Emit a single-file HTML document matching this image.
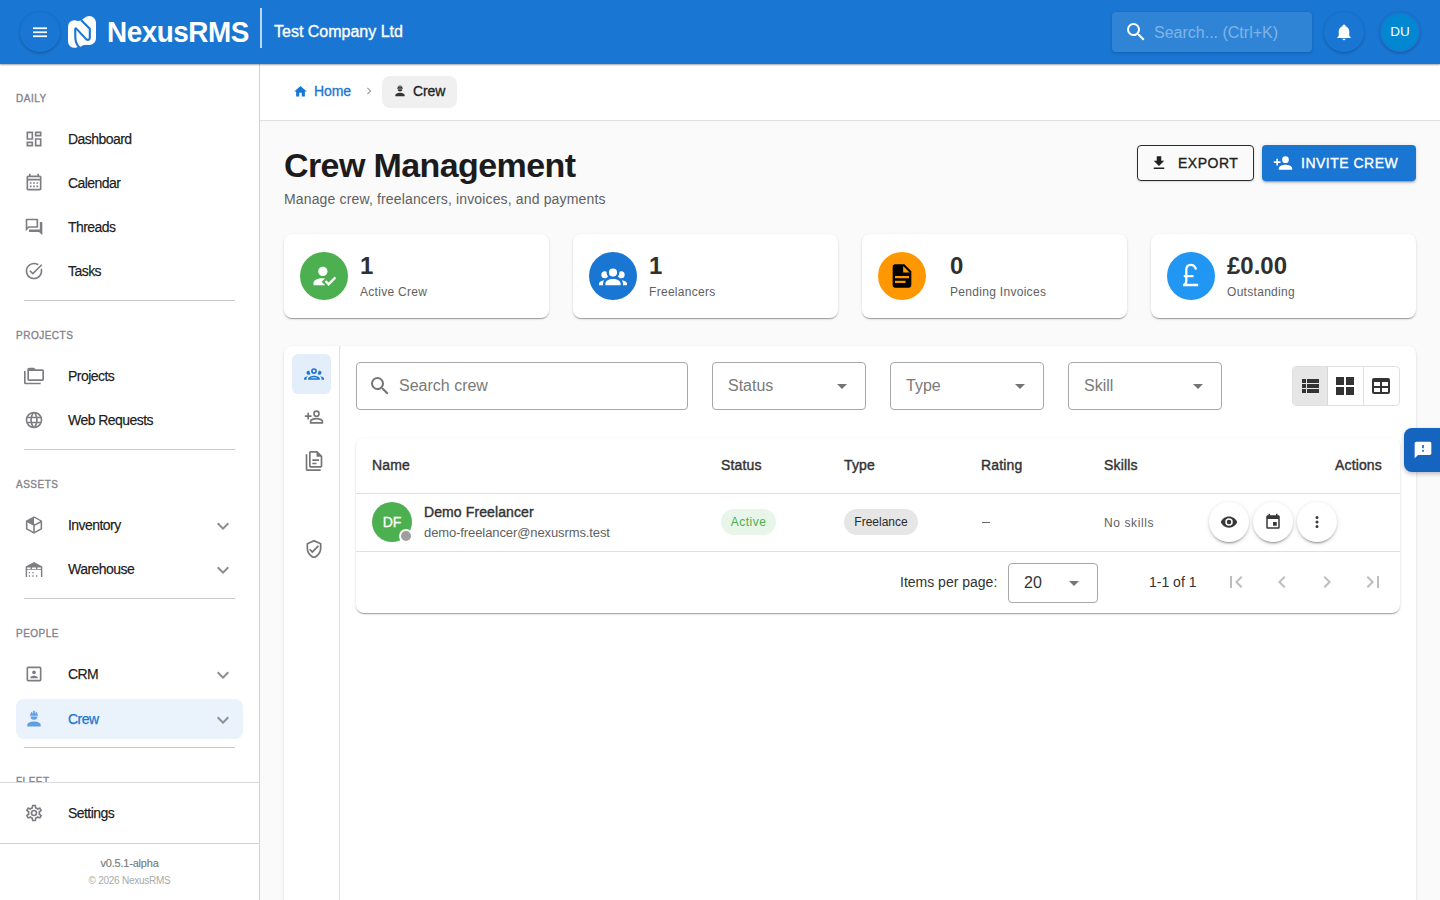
<!DOCTYPE html>
<html><head><meta charset="utf-8">
<style>
*{box-sizing:border-box;margin:0;padding:0}
html,body{width:1440px;height:900px;overflow:hidden}
body{font-family:"Liberation Sans",sans-serif;background:#fafafa;color:rgba(0,0,0,.87);position:relative}
.abs{position:absolute}
svg{display:block}
/* header */
#hdr{position:absolute;left:0;top:0;width:1440px;height:64px;background:#1976d2;box-shadow:0 1px 1.5px rgba(0,0,0,.35);z-index:5}
.menubtn{position:absolute;left:20px;top:12px;width:40px;height:40px;border-radius:50%;background:#1976d2;box-shadow:0 1px 3px rgba(0,0,0,.25)}
.brand{position:absolute;left:107px;top:15px;font-size:29.5px;line-height:34px;font-weight:700;color:#fff;letter-spacing:-0.5px;transform-origin:0 0;transform:scaleX(0.945);white-space:nowrap}
.vdiv{position:absolute;left:260px;top:8px;width:2px;height:40px;background:rgba(255,255,255,.7)}
.company{position:absolute;left:274px;top:23px;font-size:16px;color:#fff;font-weight:400;-webkit-text-stroke:0.35px #fff;letter-spacing:0px}
.hsearch{position:absolute;left:1112px;top:12px;width:200px;height:40px;border-radius:4px;background:rgba(255,255,255,.1);box-shadow:0 1px 3px rgba(0,0,0,.2)}
.hsearch span{position:absolute;left:42px;top:12px;font-size:16px;color:rgba(255,255,255,.4)}
.bell{position:absolute;left:1324px;top:12px;width:40px;height:40px;border-radius:50%;background:#1976d2;box-shadow:0 1px 3px rgba(0,0,0,.25)}
.avatar{position:absolute;left:1380px;top:12px;width:40px;height:40px;border-radius:50%;background:#1976d2;box-shadow:0 1px 3px rgba(0,0,0,.25);color:#fff;font-size:14px;text-align:center;line-height:38px}
/* sidebar */
#side{position:absolute;left:0;top:64px;width:260px;height:836px;background:#fff;border-right:1px solid #d4d0da}
.sec{position:absolute;left:16px;margin-top:2px;font-size:10px;font-weight:400;letter-spacing:0.5px;color:#86848c;-webkit-text-stroke:0.35px #86848c}
.nav{position:absolute;left:16px;width:227px;height:40px}
.nav .ic{position:absolute;left:8px;top:10px;width:20px;height:20px}
.nav .t{position:absolute;left:52px;top:12px;font-size:14px;color:rgba(0,0,0,.87);letter-spacing:-0.55px;-webkit-text-stroke:0.25px currentColor;white-space:nowrap}
.nav .chev{position:absolute;left:195px;top:9px}
.sdiv{position:absolute;left:24px;width:211px;height:1px;background:#c8c8c8}
.nav.act{background:#eaf2fc;border-radius:8px}
.nav.act .t{color:#1976d2}
.sfoot{position:absolute;left:0;top:718px;width:259px;height:118px;background:#fff;border-top:1px solid #dcd8e0}
.sfoot .ver{position:absolute;left:0;width:259px;top:74px;text-align:center;font-size:11px;color:#7a7a7a;letter-spacing:-0.2px;-webkit-text-stroke:0.15px #7a7a7a}
.sfoot .copy{position:absolute;left:0;width:259px;top:92px;text-align:center;font-size:10px;color:#aaa;letter-spacing:-0.25px}
.sfoot:after{content:"";position:absolute;left:0;top:60px;width:259px;height:1px;background:#d4d0da}
/* main */
#bc{position:absolute;left:260px;top:64px;width:1180px;height:57px;background:#fff;border-bottom:1px solid #e0e0e0}

.bchome{position:absolute;left:293px;top:81px}
.bctext{position:absolute;font-size:14px;line-height:20px;-webkit-text-stroke:0.3px currentColor;letter-spacing:-0.1px}
.chip-bc{position:absolute;left:382px;top:76px;width:75px;height:32px;border-radius:8px;background:#f0f0f0}
h1{position:absolute;left:284px;top:145px;font-size:34px;line-height:40px;font-weight:700;color:#1c1c1c;letter-spacing:-0.6px;white-space:nowrap}
.subt{position:absolute;left:284px;top:189px;font-size:14px;line-height:20px;color:#616161;letter-spacing:0.15px;white-space:nowrap}
.btn{position:absolute;top:145px;height:36px;border-radius:4px;font-size:14px;line-height:35px;letter-spacing:0.5px;font-weight:400;-webkit-text-stroke:0.35px currentColor}
.btn-out{left:1137px;width:117px;border:1px solid #2b2b2b;background:#fafafa;color:#222;box-shadow:0 1px 2px rgba(0,0,0,.15)}
.btn-pri{left:1262px;width:154px;background:#1976d2;color:#fff;box-shadow:0 3px 1px -2px rgba(0,0,0,.2),0 2px 2px 0 rgba(0,0,0,.14),0 1px 5px 0 rgba(0,0,0,.12)}
.btn svg{position:absolute;top:9px}
.btn span{position:absolute;top:0}
.stat{position:absolute;top:234px;width:265px;height:84px;background:#fff;border-radius:8px;box-shadow:0 2px 1px -1px rgba(0,0,0,.2),0 1px 1px 0 rgba(0,0,0,.14),0 1px 3px 0 rgba(0,0,0,.12)}
.stat .circ{position:absolute;left:16px;top:18px;width:48px;height:48px;border-radius:50%}
.stat .circ svg{position:absolute;left:10px;top:10px}
.stat .num{position:absolute;left:76px;top:18px;font-size:24px;line-height:28px;font-weight:700;color:#303030}
.stat .lbl{position:absolute;left:76px;top:50px;font-size:12px;line-height:16px;color:#616161;letter-spacing:0.3px}
#big{position:absolute;left:284px;top:346px;width:1132px;height:620px;background:#fff;border-radius:8px;box-shadow:0 2px 1px -1px rgba(0,0,0,.2),0 1px 1px 0 rgba(0,0,0,.14),0 1px 3px 0 rgba(0,0,0,.12)}
.rail{position:absolute;left:0;top:0;width:56px;height:620px;border-right:1px solid #e0e0e0}
.rail .ri{position:absolute;left:8px;width:39px;height:40px;border-radius:6px}
.rail .ri svg{position:absolute;left:12px;top:10px}
.fld{position:absolute;top:362px;height:48px;border:1px solid #a8a8a8;border-radius:4px;background:#fff}
.fld .ph{position:absolute;top:13px;font-size:16px;line-height:20px;color:#7a7a7a}
.fld .arr{position:absolute;top:12px}
.vt{position:absolute;left:1292px;top:366px;width:108px;height:40px;border:1px solid #e0e0e0;border-radius:4px;overflow:hidden;background:#fff}
.vt div{position:absolute;top:0;height:40px}
#tbl{position:absolute;left:356px;top:438px;width:1044px;height:175px;background:#fff;border-radius:8px;box-shadow:0 2px 1px -1px rgba(0,0,0,.2),0 1px 1px 0 rgba(0,0,0,.14),0 1px 3px 0 rgba(0,0,0,.12)}
.th{position:absolute;top:455px;font-size:14px;line-height:20px;font-weight:400;color:#333;-webkit-text-stroke:0.4px #333;letter-spacing:0.15px}
.hline{position:absolute;left:356px;width:1044px;height:1px;background:#e0e0e0}
.chip{position:absolute;top:509px;height:26px;border-radius:13px;font-size:12px;line-height:26px;text-align:center}
.abtn{position:absolute;top:502px;width:40px;height:40px;border-radius:50%;background:#fff;box-shadow:0 3px 1px -2px rgba(0,0,0,.2),0 2px 2px 0 rgba(0,0,0,.14),0 1px 5px 0 rgba(0,0,0,.12)}
.abtn svg{position:absolute;left:11px;top:11px}
.pg{position:absolute;top:570px}
.fb{position:absolute;left:1404px;top:428px;width:40px;height:44px;border-radius:8px 0 0 8px;background:#1565c0;box-shadow:0 2px 4px rgba(0,0,0,.25)}
.fb svg{position:absolute;left:9px;top:12px}
</style></head>
<body>
<div id="hdr">
  <div class="menubtn"><svg width="40" height="40" viewBox="0 0 40 40"><rect x="13" y="15.4" width="14" height="1.7" fill="#fff"/><rect x="13" y="19.4" width="14" height="1.7" fill="#fff"/><rect x="13" y="23.4" width="14" height="1.7" fill="#fff"/></svg></div>
  <svg class="abs" style="left:68px;top:16px" width="28" height="32" viewBox="0 0 28 32"><g fill="#fff"><rect x="0" y="4.2" width="13" height="27.6" rx="6.5"/><rect x="14.5" y="0" width="13.5" height="29" rx="6.75"/><rect x="6" y="9" width="16" height="17"/><path d="M7,5.5 L13.2,4.4 L16.5,1.8 L19,10 L7,10 Z"/><path d="M6,26 L11.8,31.2 L15,29.2 L21,28.5 L21,24 L6,24 Z"/></g><path d="M13.2,4.2 L21.8,12.8 L21.8,21.6 Q21.6,24.6 18.6,23.6 L8.6,12.9 Q7.2,11.6 7.2,13.8 L7.4,22.5 Q7.8,28.5 11.8,31.9" fill="none" stroke="#1976d2" stroke-width="2.1"/></svg>
  <div class="brand">NexusRMS</div>
  <div class="vdiv"></div>
  <div class="company">Test Company Ltd</div>
  <div class="hsearch"><svg width="24" height="24" viewBox="0 0 24 24" style="position:absolute;left:12px;top:8px"><path fill="#fff" d="M9.5,3A6.5,6.5 0 0,1 16,9.5C16,11.11 15.41,12.59 14.44,13.73L14.71,14H15.5L20.5,19L19,20.5L14,15.5V14.71L13.73,14.44C12.59,15.41 11.11,16 9.5,16A6.5,6.5 0 0,1 3,9.5A6.5,6.5 0 0,1 9.5,3M9.5,5C7,5 5,7 5,9.5C5,12 7,14 9.5,14C12,14 14,12 14,9.5C14,7 12,5 9.5,5Z"/></svg><span>Search... (Ctrl+K)</span></div>
  <div class="bell"><svg width="18" height="18" viewBox="0 0 24 24" style="position:absolute;left:11px;top:11px"><path fill="#fff" d="M21,19V20H3V19L5,17V11C5,7.9 7.03,5.17 10,4.29C10,4.19 10,4.1 10,4A2,2 0 0,1 12,2A2,2 0 0,1 14,4C14,4.1 14,4.19 14,4.29C16.97,5.17 19,7.9 19,11V17L21,19M14,21A2,2 0 0,1 12,23A2,2 0 0,1 10,21"/></svg></div>
  <div class="avatar"><div style="position:absolute;left:2px;top:2px;width:36px;height:36px;border-radius:50%;background:#0288d1;line-height:36px;font-size:13.5px">DU</div></div>
</div>
<div id="side">
<div class="sec" style="top:27px">DAILY</div>
<div class="nav" style="top:55px"><svg class="ic" viewBox="0 0 24 24"><path fill="#7f7d84" d="M19 5v2h-4V5h4M9 5v6H5V5h4m10 8v6h-4v-6h4M9 17v2H5v-2h4M21 3h-8v6h8V3zM11 3H3v10h8V3zm10 8h-8v10h8V11zm-10 4H3v6h8v-6z"/></svg><div class="t">Dashboard</div></div>
<div class="nav" style="top:99px"><svg class="ic" viewBox="0 0 24 24"><path fill="#7f7d84" d="M7 11H9V13H7V11M21 5V19C21 20.11 20.11 21 19 21H5C3.89 21 3 20.1 3 19V5C3 3.9 3.9 3 5 3H6V1H8V3H16V1H18V3H19C20.11 3 21 3.9 21 5M5 7H19V5H5V7M19 19V9H5V19H19M15 13V11H17V13H15M11 13V11H13V13H11M7 15H9V17H7V15M15 17V15H17V17H15M11 17V15H13V17H11Z"/></svg><div class="t">Calendar</div></div>
<div class="nav" style="top:143px"><svg class="ic" viewBox="0 0 24 24"><path fill="#7f7d84" d="M15,4V11H5.17L4,12.17V4H15M16,2H3A1,1 0 0,0 2,3V17L6,13H16A1,1 0 0,0 17,12V3A1,1 0 0,0 16,2M21,6H19V15H6V17A1,1 0 0,0 7,18H18L22,22V7A1,1 0 0,0 21,6Z"/></svg><div class="t">Threads</div></div>
<div class="nav" style="top:187px"><svg class="ic" viewBox="0 0 24 24"><path fill="#7f7d84" d="M22,5.18L10.59,16.6l-4.24-4.24l1.41-1.41l2.83,2.83l10-10L22,5.18z M19.79,10.22C19.92,10.79,20,11.39,20,12c0,4.42-3.58,8-8,8s-8-3.58-8-8c0-4.42,3.58-8,8-8c1.58,0,3.04,0.46,4.28,1.25l1.44-1.44C16.1,2.67,14.13,2,12,2C6.48,2,2,6.48,2,12c0,5.52,4.48,10,10,10s10-4.48,10-10c0-1.19-0.22-2.33-0.6-3.39L19.79,10.22z"/></svg><div class="t">Tasks</div></div>
<div class="sdiv" style="top:236px"></div>
<div class="sec" style="top:264px">PROJECTS</div>
<div class="nav" style="top:292px"><svg class="ic" viewBox="0 0 24 24"><path fill="#7f7d84" d="M22,4A2,2 0 0,1 24,6V16A2,2 0 0,1 22,18H6A2,2 0 0,1 4,16V4A2,2 0 0,1 6,2H12L14,4H22M2,6V20H20V22H2A2,2 0 0,1 0,20V11H0V6H2M6,6V16H22V6H6Z"/></svg><div class="t">Projects</div></div>
<div class="nav" style="top:336px"><svg class="ic" viewBox="0 0 24 24"><path fill="#7f7d84" d="M16.36,14C16.44,13.34 16.5,12.68 16.5,12C16.5,11.32 16.44,10.66 16.36,10H19.74C19.9,10.64 20,11.31 20,12C20,12.69 19.9,13.36 19.74,14M14.59,19.56C15.19,18.45 15.65,17.25 15.97,16H18.92C17.96,17.65 16.43,18.93 14.59,19.56M14.34,14H9.66C9.56,13.340 9.5,12.68 9.5,12C9.5,11.32 9.56,10.65 9.66,10H14.34C14.43,10.65 14.5,11.32 14.5,12C14.5,12.68 14.43,13.34 14.34,14M12,19.96C11.17,18.76 10.5,17.43 10.09,16H13.91C13.5,17.43 12.83,18.76 12,19.96M8,8H5.08C6.03,6.34 7.57,5.06 9.4,4.44C8.8,5.55 8.35,6.750 8,8M5.08,16H8C8.350,17.25 8.8,18.45 9.4,19.56C7.57,18.93 6.03,17.65 5.08,16M4.26,14C4.1,13.36 4,12.69 4,12C4,11.31 4.1,10.64 4.26,10H7.64C7.56,10.66 7.5,11.32 7.5,12C7.5,12.68 7.56,13.34 7.64,14M12,4.03C12.83,5.23 13.5,6.57 13.91,8H10.09C10.5,6.57 11.17,5.23 12,4.03M18.92,8H15.97C15.65,6.75 15.19,5.55 14.59,4.44C16.43,5.07 17.96,6.34 18.92,8M12,2C6.47,2 2,6.5 2,12A10,10 0 0,0 12,22A10,10 0 0,0 22,12A10,10 0 0,0 12,2Z"/></svg><div class="t">Web Requests</div></div>
<div class="sdiv" style="top:385px"></div>
<div class="sec" style="top:413px">ASSETS</div>
<div class="nav" style="top:441px"><svg class="ic" viewBox="0 0 24 24"><g fill="none" stroke="#7f7d84" stroke-width="1.9" stroke-linejoin="round"><path d="M12,2.6 L20.8,7.4 V16.6 L12,21.4 L3.2,16.6 V7.4 Z"/><path d="M3.2,7.4 L12,12 L20.8,7.4 M12,12 V21.4 M12,12.4 L20.2,8.2"/></g><path d="M3.2,7.4 L12,2.6 V11.6 Z" fill="#7f7d84"/><path d="M12.6,4 L19.5,7.6 L12.6,11 Z" fill="#fff"/></svg><div class="t">Inventory</div><svg class="chev" width="24" height="24" viewBox="0 0 24 24"><path fill="#8e8c94" d="M7.41,8.58L12,13.17L16.59,8.58L18,10L12,16L6,10L7.41,8.58Z"/></svg></div>
<div class="nav" style="top:485px"><svg class="ic" viewBox="0 0 24 24"><path fill="#7f7d84" fill-rule="evenodd" d="M2,9 L12,3.5 L22,9 V21.5 H20.3 V13 H3.7 V21.5 H2 Z M3.8,10.1 H7.9 V12 H3.8 Z M9.6,10.1 H14.3 V12 H9.6 Z M16,10.1 H20.2 V12 H16 Z"/><path fill="#7f7d84" d="M5.7,15.6h1.6v1.6h-1.6z M10,15.6h1.6v1.6h-1.6z M5.7,19.6h1.6v1.6h-1.6z M10,19.6h1.6v1.6h-1.6z M14.3,19.6h1.6v1.6h-1.6z"/></svg><div class="t">Warehouse</div><svg class="chev" width="24" height="24" viewBox="0 0 24 24"><path fill="#8e8c94" d="M7.41,8.58L12,13.17L16.59,8.58L18,10L12,16L6,10L7.41,8.58Z"/></svg></div>
<div class="sdiv" style="top:534px"></div>
<div class="sec" style="top:562px">PEOPLE</div>
<div class="nav" style="top:590px"><svg class="ic" viewBox="0 0 24 24"><path fill="#7f7d84" d="M19,19H5V5H19M19,3H5A2,2 0 0,0 3,5V19A2,2 0 0,0 5,21H19A2,2 0 0,0 21,19V5A2,2 0 0,0 19,3M16.5,16.25C16.5,14.75 13.5,14 12,14C10.5,14 7.5,14.750 7.5,16.25V17H16.5M12,12.25A2.25,2.25 0 0,0 14.25,10A2.25,2.25 0 0,0 12,7.75A2.25,2.25 0 0,0 9.75,10A2.25,2.25 0 0,0 12,12.25Z"/></svg><div class="t">CRM</div><svg class="chev" width="24" height="24" viewBox="0 0 24 24"><path fill="#8e8c94" d="M7.41,8.58L12,13.17L16.59,8.58L18,10L12,16L6,10L7.41,8.58Z"/></svg></div>
<div class="nav act" style="top:635px"><svg class="ic" viewBox="0 0 24 24"><path fill="#5f9ee3" d="M12,15C7.58,15 4,16.79 4,19V21H20V19C20,16.79 16.42,15 12,15M8,9A4,4 0 0,0 12,13A4,4 0 0,0 16,9M11.5,2C11.2,2 11,2.21 11,2.5V5.5H10V3C10,3 7.75,3.86 7.75,6.75C7.75,6.75 7,6.89 7,8H17C16.95,6.89 16.25,6.75 16.25,6.75C16.25,3.86 14,3 14,3V5.5H13V2.5C13,2.21 12.81,2 12.5,2H11.5Z"/></svg><div class="t">Crew</div><svg class="chev" width="24" height="24" viewBox="0 0 24 24"><path fill="#8e8c94" d="M7.41,8.58L12,13.17L16.59,8.58L18,10L12,16L6,10L7.41,8.58Z"/></svg></div>
<div class="sdiv" style="top:683px"></div>
<div class="sec" style="top:710px">FLEET</div>
<div class="sfoot">
<div class="nav" style="top:10px"><svg class="ic" viewBox="0 0 24 24"><path fill="#7f7d84" d="M12,8A4,4 0 0,1 16,12A4,4 0 0,1 12,16A4,4 0 0,1 8,12A4,4 0 0,1 12,8M12,10A2,2 0 0,0 10,12A2,2 0 0,0 12,14A2,2 0 0,0 14,12A2,2 0 0,0 12,10M10,22C9.75,22 9.54,21.82 9.5,21.58L9.13,18.93C8.5,18.68 7.96,18.34 7.44,17.94L4.95,18.95C4.73,19.03 4.46,18.95 4.34,18.73L2.34,15.27C2.21,15.05 2.27,14.78 2.46,14.63L4.57,12.97L4.5,12L4.57,11L2.46,9.37C2.27,9.22 2.21,8.95 2.34,8.73L4.34,5.27C4.46,5.05 4.73,4.96 4.95,5.050L7.44,6.05C7.96,5.66 8.5,5.32 9.13,5.07L9.5,2.42C9.54,2.18 9.75,2 10,2H14C14.25,2 14.46,2.18 14.5,2.42L14.87,5.07C15.5,5.32 16.04,5.66 16.56,6.05L19.05,5.05C19.27,4.96 19.54,5.05 19.66,5.27L21.66,8.73C21.79,8.95 21.73,9.22 21.54,9.37L19.43,11L19.5,12L19.43,13L21.54,14.63C21.73,14.78 21.79,15.05 21.66,15.27L19.66,18.73C19.54,18.95 19.27,19.04 19.05,18.95L16.56,17.95C16.04,18.34 15.5,18.68 14.87,18.93L14.5,21.58C14.46,21.82 14.25,22 14,22H10M11.25,4L10.88,6.61C9.68,6.86 8.62,7.5 7.85,8.39L5.44,7.35L4.69,8.65L6.8,10.2C6.4,11.37 6.4,12.64 6.8,13.8L4.68,15.36L5.43,16.66L7.86,15.62C8.63,16.5 9.68,17.14 10.87,17.38L11.24,20H12.76L13.13,17.39C14.32,17.14 15.37,16.5 16.14,15.62L18.57,16.66L19.32,15.36L17.2,13.81C17.6,12.64 17.6,11.370 17.2,10.2L19.31,8.65L18.56,7.35L16.15,8.39C15.38,7.5 14.32,6.86 13.12,6.62L12.75,4H11.25Z"/></svg><div class="t">Settings</div></div>
<div class="ver">v0.5.1-alpha</div>
<div class="copy">&copy; 2026 NexusRMS</div>
</div>
</div>

<div id="bc"></div>
<svg width="15" height="15" viewBox="0 0 24 24" style="position:absolute;left:293px;top:84px"><path fill="#1976d2" d="M10,20V14H14V20H19V12H22L12,3L2,12H5V20H10Z"/></svg>
<div class="bctext" style="left:314px;top:81px;color:#1976d2">Home</div>
<svg width="14" height="14" viewBox="0 0 24 24" style="position:absolute;left:362px;top:84px"><path fill="#9e9e9e" d="M8.59,16.58L13.17,12L8.59,7.41L10,6L16,12L10,18L8.59,16.58Z"/></svg>
<div class="chip-bc"></div>
<svg width="14" height="14" viewBox="0 0 24 24" style="position:absolute;left:393px;top:84px"><path fill="#333" d="M12,15C7.58,15 4,16.79 4,19V21H20V19C20,16.79 16.42,15 12,15M8,9A4,4 0 0,0 12,13A4,4 0 0,0 16,9M11.5,2C11.2,2 11,2.21 11,2.5V5.5H10V3C10,3 7.75,3.86 7.75,6.75C7.75,6.75 7,6.89 7,8H17C16.95,6.89 16.25,6.75 16.25,6.75C16.25,3.86 14,3 14,3V5.5H13V2.5C13,2.21 12.81,2 12.5,2H11.5Z"/></svg>
<div class="bctext" style="left:413px;top:81px;color:#222">Crew</div>

<h1>Crew Management</h1>
<div class="subt">Manage crew, freelancers, invoices, and payments</div>

<div class="btn btn-out"><svg width="18" height="18" viewBox="0 0 24 24" style="left:12px;top:8px"><path fill="#222" d="M5,20H19V18H5M19,9H15V3H9V9H5L12,16L19,9Z"/></svg><span style="left:40px">EXPORT</span></div>
<div class="btn btn-pri"><svg width="20" height="20" viewBox="0 0 24 24" style="left:11px;top:8px"><path fill="#fff" d="M15,14C12.33,14 7,15.33 7,18V20H23V18C23,15.33 17.67,14 15,14M6,10V7H4V10H1V12H4V15H6V12H9V10M15,12A4,4 0 0,0 19,8A4,4 0 0,0 15,4A4,4 0 0,0 11,8A4,4 0 0,0 15,12Z"/></svg><span style="left:39px;top:1px">INVITE CREW</span></div>

<div class="stat" style="left:284px"><div class="circ" style="background:#4caf50"><svg width="28" height="28" viewBox="0 0 24 24" style=""><path fill="#fff" d="M21.1,12.5L22.5,13.91L15.97,20.5L12.5,17L13.9,15.59L15.97,17.67L21.1,12.5M10,17L13,20H3V18C3,15.79 6.58,14 11,14L12.89,14.11L10,17M11,4A4,4 0 0,1 15,8A4,4 0 0,1 11,12A4,4 0 0,1 7,8A4,4 0 0,1 11,4Z"/></svg></div><div class="num">1</div><div class="lbl">Active Crew</div></div>
<div class="stat" style="left:573px"><div class="circ" style="background:#1976d2"><svg width="28" height="28" viewBox="0 0 24 24" style=""><path fill="#fff" d="M12,5.5A3.5,3.5 0 0,1 15.5,9A3.5,3.5 0 0,1 12,12.5A3.5,3.5 0 0,1 8.5,9A3.5,3.5 0 0,1 12,5.5M5,8C5.56,8 6.08,8.15 6.53,8.42C6.38,9.85 6.8,11.27 7.66,12.38C7.16,13.34 6.16,14 5,14A3,3 0 0,1 2,11A3,3 0 0,1 5,8M19,8A3,3 0 0,1 22,11A3,3 0 0,1 19,14C17.84,14 16.84,13.34 16.34,12.38C17.2,11.27 17.62,9.85 17.47,8.42C17.92,8.15 18.44,8 19,8M5.5,18.25C5.5,16.18 8.41,14.5 12,14.5C15.59,14.5 18.5,16.18 18.5,18.25V20H5.5V18.25M0,20V18.5C0,17.11 1.89,15.94 4.45,15.6C3.86,16.280 3.5,17.22 3.5,18.25V20H0M24,20H20.5V18.25C20.5,17.22 20.14,16.28 19.55,15.6C22.11,15.94 24,17.11 24,18.5V20Z"/></svg></div><div class="num">1</div><div class="lbl">Freelancers</div></div>
<div class="stat" style="left:862px"><div class="circ" style="background:#ff9800"><svg width="28" height="28" viewBox="0 0 24 24" style=""><path fill="#000" d="M13,9H18.5L13,3.5V9M6,2H14L20,8V20A2,2 0 0,1 18,22H6C4.89,22 4,21.1 4,20V4C4,2.89 4.89,2 6,2M15,18V16H6V18H15M18,14V12H6V14H18Z"/></svg></div><div class="num" style="left:88px">0</div><div class="lbl" style="left:88px">Pending Invoices</div></div>
<div class="stat" style="left:1151px"><div class="circ" style="background:#2196f3"><svg width="48" height="48" viewBox="0 0 48 48" style="left:0;top:0"><path d="M29,17.5 C28.3,14.3 26.2,12.8 23.8,12.8 C20.9,12.8 19.3,15 19.3,18 L19.3,29 C19.3,30.8 18.5,32.2 17,33 M16,33 H31.2 M16.8,24.2 H26.5" fill="none" stroke="#fff" stroke-width="2.3"/></svg></div><div class="num">&pound;0.00</div><div class="lbl">Outstanding</div></div>

<div id="big">
  <div class="rail">
    <div class="ri" style="top:8px;background:#e3eefa"><svg width="20" height="20" viewBox="0 0 24 24" style=""><path fill="#1976d2" d="M12,5A3.5,3.5 0 0,0 8.5,8.5A3.5,3.5 0 0,0 12,12A3.5,3.5 0 0,0 15.5,8.5A3.5,3.5 0 0,0 12,5M12,7A1.5,1.5 0 0,1 13.5,8.5A1.5,1.5 0 0,1 12,10A1.5,1.5 0 0,1 10.5,8.5A1.5,1.5 0 0,1 12,7M5.5,8A2.5,2.5 0 0,0 3,10.5C3,11.44 3.53,12.25 4.29,12.68C4.65,12.88 5.06,13 5.5,13C5.94,13 6.35,12.88 6.71,12.68C7.08,12.47 7.39,12.17 7.62,11.81C6.89,10.86 6.5,9.7 6.5,8.5C6.5,8.41 6.5,8.31 6.5,8.22C6.2,8.08 5.86,8 5.5,8M18.5,8C18.14,8 17.8,8.08 17.5,8.22C17.5,8.31 17.5,8.41 17.5,8.5C17.5,9.7 17.11,10.86 16.38,11.81C16.5,12 16.63,12.15 16.78,12.3C16.94,12.45 17.1,12.58 17.29,12.68C17.65,12.88 18.06,13 18.5,13C18.94,13 19.35,12.88 19.71,12.68C20.47,12.25 21,11.44 21,10.5A2.5,2.5 0 0,0 18.5,8M12,14C9.66,14 5,15.17 5,17.5V19H19V17.5C19,15.17 14.34,14 12,14M4.71,14.55C2.78,14.78 0,15.76 0,17.5V19H3V17.07C3,16.06 3.69,15.22 4.71,14.55M19.29,14.55C20.31,15.22 21,16.06 21,17.07V19H24V17.5C24,15.76 21.22,14.78 19.29,14.55M12,16C13.53,16 15.24,16.5 16.23,17H7.77C8.76,16.5 10.47,16 12,16Z"/></svg></div>
    <div class="ri" style="top:51px"><svg width="20" height="20" viewBox="0 0 24 24" style=""><path fill="#757575" d="M15,4A4,4 0 0,0 11,8A4,4 0 0,0 15,12A4,4 0 0,0 19,8A4,4 0 0,0 15,4M15,5.9C16.16,5.9 17.1,6.84 17.1,8C17.1,9.16 16.16,10.1 15,10.1A2.1,2.1 0 0,1 12.9,8A2.1,2.1 0 0,1 15,5.9M4,7V10H1V12H4V15H6V12H9V10H6V7H4M15,13C12.33,13 7,14.33 7,17V20H23V17C23,14.33 17.67,13 15,13M15,14.9C17.970,14.9 21.1,16.36 21.1,17V18.1H8.9V17C8.9,16.36 12,14.9 15,14.9Z"/></svg></div>
    <div class="ri" style="top:95px"><svg width="20" height="20" viewBox="0 0 24 24" style=""><path fill="#757575" d="M16 0H8C6.9 0 6 .9 6 2V18C6 19.1 6.9 20 8 20H20C21.1 20 22 19.1 22 18V6L16 0M20 18H8V2H15V7H20V18M4 4V22H20V24H4C2.9 24 2 23.1 2 22V4H4M10 10V12H18V10H10M10 14V16H15V14H10Z"/></svg></div>
    <div class="ri" style="top:183px"><svg width="20" height="20" viewBox="0 0 24 24" style=""><path fill="#757575" d="M21,11C21,16.55 17.16,21.74 12,23C6.84,21.74 3,16.55 3,11V5L12,1L21,5V11M12,21C15.75,20 19,15.54 19,11.22V6.3L12,3.18L5,6.3V11.22C5,15.54 8.25,20 12,21M10,17L6,13L7.41,11.59L10,14.17L16.59,7.58L18,9"/></svg></div>
  </div>
</div>

<div class="fld" style="left:356px;width:332px"><svg width="24" height="24" viewBox="0 0 24 24" style="position:absolute;left:11px;top:11px"><path fill="#757575" d="M9.5,3A6.5,6.5 0 0,1 16,9.5C16,11.11 15.41,12.59 14.44,13.73L14.71,14H15.5L20.5,19L19,20.5L14,15.5V14.71L13.73,14.44C12.59,15.41 11.11,16 9.5,16A6.5,6.5 0 0,1 3,9.5A6.5,6.5 0 0,1 9.5,3M9.5,5C7,5 5,7 5,9.5C5,12 7,14 9.5,14C12,14 14,12 14,9.5C14,7 12,5 9.5,5Z"/></svg><div class="ph" style="left:42px">Search crew</div></div>
<div class="fld" style="left:712px;width:154px"><div class="ph" style="left:15px">Status</div><svg width="24" height="24" viewBox="0 0 24 24" style="position:absolute;left:117px;top:11px"><path fill="#757575" d="M7,10L12,15L17,10H7Z"/></svg></div>
<div class="fld" style="left:890px;width:154px"><div class="ph" style="left:15px">Type</div><svg width="24" height="24" viewBox="0 0 24 24" style="position:absolute;left:117px;top:11px"><path fill="#757575" d="M7,10L12,15L17,10H7Z"/></svg></div>
<div class="fld" style="left:1068px;width:154px"><div class="ph" style="left:15px">Skill</div><svg width="24" height="24" viewBox="0 0 24 24" style="position:absolute;left:117px;top:11px"><path fill="#757575" d="M7,10L12,15L17,10H7Z"/></svg></div>

<div class="vt">
  <div style="left:0;width:35px;background:#e6e6e6;border-right:1px solid #d8d8d8"><svg width="24" height="24" viewBox="0 0 24 24" style="position:absolute;left:5px;top:7px"><path fill="#333" d="M9,5V9H21V5M9,19H21V15H9M9,14H21V10H9M4,9H8V5H4M4,19H8V15H4M4,14H8V10H4V14Z"/></svg></div>
  <div style="left:35px;width:36px;border-right:1px solid #e0e0e0"><svg width="24" height="24" viewBox="0 0 24 24" style="position:absolute;left:5px;top:7px"><path fill="#333" d="M3,11H11V3H3M3,21H11V13H3M13,21H21V13H13M13,3V11H21V3"/></svg></div>
  <div style="left:71px;width:36px"><svg width="24" height="24" viewBox="0 0 24 24" style="position:absolute;left:5px;top:7px"><path fill="#333" d="M5,4H19A2,2 0 0,1 21,6V18A2,2 0 0,1 19,20H5A2,2 0 0,1 3,18V6A2,2 0 0,1 5,4M5,8V12H11V8H5M13,8V12H19V8H13M5,14V18H11V14H5M13,14V18H19V14H13Z"/></svg></div>
</div>

<div id="tbl"></div>
<div class="th" style="left:372px">Name</div>
<div class="th" style="left:721px">Status</div>
<div class="th" style="left:844px">Type</div>
<div class="th" style="left:981px">Rating</div>
<div class="th" style="left:1104px">Skills</div>
<div class="th" style="left:1335px">Actions</div>
<div class="hline" style="top:493px"></div>
<div class="abs" style="left:372px;top:502px;width:40px;height:40px;border-radius:50%;background:#4caf50;color:#fff;font-size:14px;line-height:40px;text-align:center;-webkit-text-stroke:0.3px #fff">DF</div>
<div class="abs" style="left:399px;top:529px;width:14px;height:14px;border-radius:50%;background:#9e9e9e;border:2px solid #fff"></div>
<div class="abs" style="left:424px;top:502px;font-size:14px;line-height:20px;font-weight:400;color:#333;-webkit-text-stroke:0.4px #333;letter-spacing:0.1px">Demo Freelancer</div>
<div class="abs" style="left:424px;top:524px;font-size:13px;line-height:18px;color:#616161;letter-spacing:-0.1px">demo-freelancer@nexusrms.test</div>
<div class="chip" style="left:721px;width:55px;background:#e8f5e9;color:#4caf50;letter-spacing:0.5px">Active</div>
<div class="chip" style="left:844px;width:74px;background:#e6e6e6;color:#2a2a2a">Freelance</div>
<div class="abs" style="left:982px;top:522px;width:8px;height:1px;background:#666"></div>
<div class="abs" style="left:1104px;top:515px;font-size:12px;line-height:16px;color:#616161;letter-spacing:0.6px">No skills</div>
<div class="abtn" style="left:1209px"><svg width="18" height="18" viewBox="0 0 24 24" style=""><path fill="#383838" d="M12,9A3,3 0 0,0 9,12A3,3 0 0,0 12,15A3,3 0 0,0 15,12A3,3 0 0,0 12,9M12,17A5,5 0 0,1 7,12A5,5 0 0,1 12,7A5,5 0 0,1 17,12A5,5 0 0,1 12,17M12,4.5C7,4.5 2.73,7.61 1,12C2.73,16.39 7,19.5 12,19.5C17,19.5 21.27,16.39 23,12C21.27,7.61 17,4.5 12,4.5Z"/></svg></div>
<div class="abtn" style="left:1253px"><svg width="18" height="18" viewBox="0 0 24 24" style=""><path fill="#383838" d="M19,19H5V8H19M16,1V3H8V1H6V3H5C3.89,3 3,3.89 3,5V19A2,2 0 0,0 5,21H19A2,2 0 0,0 21,19V5C21,3.89 20.1,3 19,3H18V1M17,12H12V17H17V12Z"/></svg></div>
<div class="abtn" style="left:1297px"><svg width="18" height="18" viewBox="0 0 24 24" style=""><path fill="#383838" d="M12,16A2,2 0 0,1 14,18A2,2 0 0,1 12,20A2,2 0 0,1 10,18A2,2 0 0,1 12,16M12,10A2,2 0 0,1 14,12A2,2 0 0,1 12,14A2,2 0 0,1 10,12A2,2 0 0,1 12,10M12,4A2,2 0 0,1 14,6A2,2 0 0,1 12,8A2,2 0 0,1 10,6A2,2 0 0,1 12,4Z"/></svg></div>
<div class="hline" style="top:551px"></div>
<div class="abs" style="left:900px;top:572px;font-size:14px;line-height:20px;color:#333">Items per page:</div>
<div class="abs" style="left:1008px;top:563px;width:90px;height:40px;border:1px solid #a8a8a8;border-radius:4px"><div style="position:absolute;left:15px;top:9px;font-size:16px;line-height:20px;color:#333">20</div><svg width="24" height="24" viewBox="0 0 24 24" style="position:absolute;left:53px;top:7px"><path fill="#757575" d="M7,10L12,15L17,10H7Z"/></svg></div>
<div class="abs" style="left:1149px;top:572px;font-size:14px;line-height:20px;color:#333">1-1 of 1</div>
<svg width="24" height="24" viewBox="0 0 24 24" style="position:absolute;left:1224px;top:570px"><path fill="#bdbdbd" d="M18.41,16.59L13.82,12L18.41,7.41L17,6L11,12L17,18L18.41,16.59M6,6H8V18H6V6Z"/></svg>
<svg width="24" height="24" viewBox="0 0 24 24" style="position:absolute;left:1270px;top:570px"><path fill="#bdbdbd" d="M15.41,16.58L10.830,12L15.41,7.41L14,6L8,12L14,18L15.41,16.58Z"/></svg>
<svg width="24" height="24" viewBox="0 0 24 24" style="position:absolute;left:1315px;top:570px"><path fill="#bdbdbd" d="M8.59,16.58L13.17,12L8.59,7.41L10,6L16,12L10,18L8.59,16.58Z"/></svg>
<svg width="24" height="24" viewBox="0 0 24 24" style="position:absolute;left:1361px;top:570px"><path fill="#bdbdbd" d="M5.59,7.41L10.18,12L5.59,16.59L7,18L13,12L7,6L5.59,7.41M16,6H18V18H16V6Z"/></svg>

<div class="fb"><svg width="20" height="20" viewBox="0 0 24 24" style=""><path fill="#fff" d="M20 2H4c-1.1 0-1.99.9-1.99 2L2 22l4-4h14c1.1 0 2-.9 2-2V4c0-1.1-.9-2-2-2zm-7 12h-2v-2h2v2zm0-4h-2V6h2v4z"/></svg></div>

</body></html>
